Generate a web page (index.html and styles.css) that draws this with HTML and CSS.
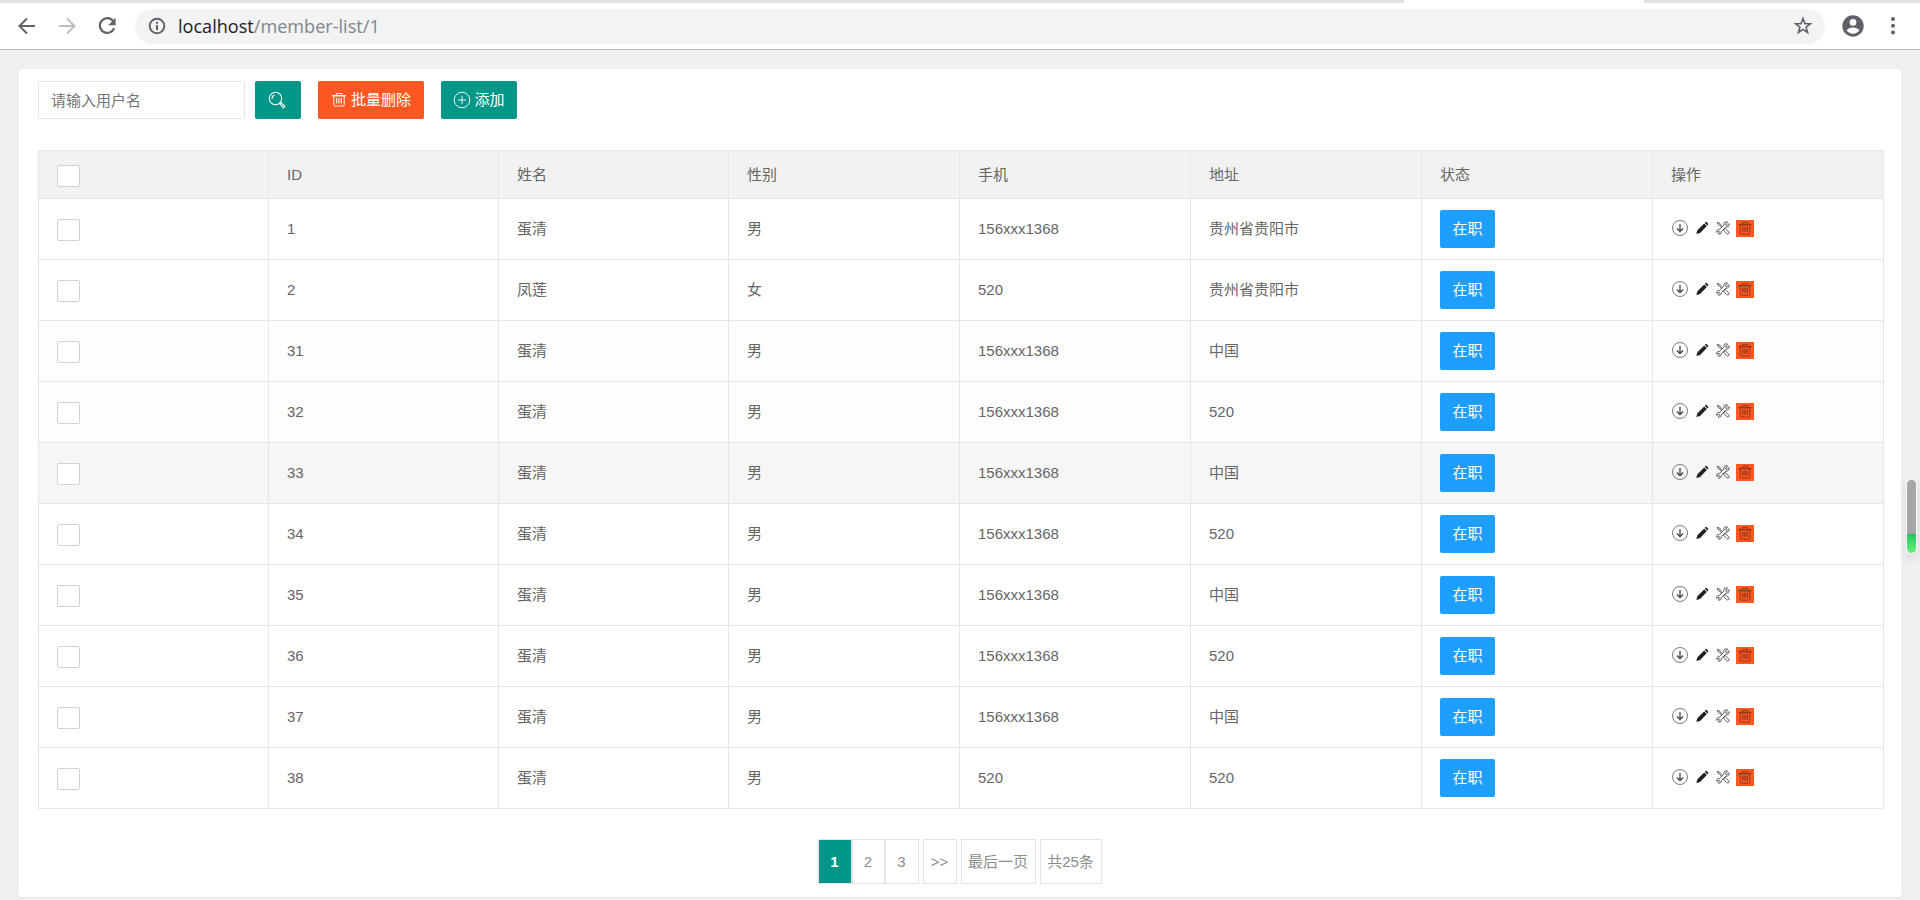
FILE: index.html
```html
<!DOCTYPE html>
<html lang="zh-CN">
<head>
	<meta charset="utf-8">
	<title>member-list</title>
	<link rel="stylesheet" href="styles.css">
</head>
<body>
	<svg class="sprite">
		<symbol id="i-del" viewBox="0 0 16 16">
			<path d="M1 3.500h14M5.200 3V1.500h5.600V3M2.800 4v8.800q0 1.200 1.200 1.200h8q1.200 0 1.200-1.200V4" fill="none" stroke="currentColor" stroke-width=".9"/>
			<path d="M1.500 3.500h13v1.500h-13z" fill="currentColor" opacity=".5"/>
			<path d="M5.700 6v5.500M8 6v5.500M10.300 6v5.500" fill="none" stroke="currentColor" stroke-width="1.100"/>
		</symbol>
		<symbol id="i-down" viewBox="0 0 16 16">
			<circle cx="8" cy="8" r="7.500" fill="none" stroke="currentColor" stroke-width=".7"/>
			<path d="M8 4v7.400M4.900 8.500L8 11.500l3.100-3" fill="none" stroke="currentColor" stroke-width="1.300"/>
		</symbol>
		<symbol id="i-edit" viewBox="0 0 16 16">
			<path d="M1.500 14.800l1.200-4.300 7.800-7.700 3 3-7.700 7.800zM11.200 2.100l1-.9q.6-.5 1.100 0l1.800 1.800q.5.500 0 1.100l-.9 1z" fill="currentColor"/>
		</symbol>
		<symbol id="i-tool" viewBox="0 0 16 16">
			<path d="M1.500 1.500l2.800 1 .8 1.800 2.400 2.400M1.500 1.500l1 2.700 1.800.9 2.500 2.400M9.200 9.200l1.600-.4 4 4q.4 1.200-.5 1.900-.9.500-1.800-.2l-3.800-3.800zM13.300 1.300l-2.200 2.200.3 1.300 1.300.3 2.100-2.100q.6 2.800-1.300 3.800-1 .4-2.200.1l-5.400 5.400q.4 1.800-.9 2.500-1.200.7-2.500 0l1.600-1.700-.4-1.200-1.200-.3-1.600 1.500q-.5-2.500 1.200-3.400 1-.4 1.900-.1l5.100-5q-.5-2.200.8-3.200 1.400-.9 3.400-.1z" fill="none" stroke="currentColor" stroke-width="1"/>
		</symbol>
	</svg>

	<div class="tabs"><div class="tab"></div></div>
	<div class="toolbar">
		<svg class="back" viewBox="0 0 20 20"><path d="M18 10H3M10 2.500L2.500 10l7.500 7.500"/></svg>
		<svg class="forward" viewBox="0 0 20 20"><path d="M2 10h15M10 2.500l7.500 7.500-7.500 7.500"/></svg>
		<svg class="reload" viewBox="0 0 20 20"><path d="M16.300 5.200A7.400 7.400 0 1 0 17.200 12.200"/><path class="solid" d="M18.600 1.800v7.400h-7.400z"/></svg>
		<div class="address">
			<svg class="info" viewBox="0 0 18 18"><circle cx="9" cy="9" r="7.300"/><path d="M9 8v5M9 4.800v1.900"/></svg>
			<span class="url"><b>localhost</b>/member-list/1</span>
			<svg class="star" viewBox="0 0 20 20"><path d="M10 2.500l1.900 5.100 5.500.2-4.300 3.400 1.500 5.300-4.600-3.100-4.600 3.100 1.500-5.300-4.300-3.400 5.500-.2z"/></svg>
		</div>
		<svg class="user" viewBox="0 0 22 22"><circle cx="11" cy="11" r="10.700"/><circle class="cut" cx="11" cy="7.400" r="3.300"/><path class="cut" d="M4.600 15.600q1.700-3 6.400-3t6.400 3q-2.300 3.100-6.400 3.100t-6.400-3.100z"/></svg>
		<svg class="more" viewBox="0 0 4 18"><circle cx="2" cy="2" r="2"/><circle cx="2" cy="8.700" r="2"/><circle cx="2" cy="15.400" r="2"/></svg>
	</div>

	<div class="card">
		<div class="search">
			<input type="text" class="input" placeholder="请输入用户名">
			<button class="btn btn-search">
				<svg viewBox="0 0 18 18"><circle cx="7.500" cy="7.500" r="6.200"/><path d="M4 8q0-3 2.600-4M11.600 12.600l1.200-1.100 4 3.800-1.400 1.600z"/></svg>
			</button>
			<button class="btn btn-danger"><svg><use href="#i-del"/></svg>批量删除</button>
			<button class="btn btn-add"><svg viewBox="0 0 18 18"><circle cx="9" cy="9" r="7.800"/><path d="M9 4.800v8.400M4.800 9h8.400"/></svg>添加</button>
		</div>

		<table class="table">
			<thead>
				<tr>
					<th class="narrow"><i class="checkbox"></i></th>
					<th class="narrow">ID</th>
					<th class="narrow">姓名</th>
					<th>性别</th>
					<th>手机</th>
					<th>地址</th>
					<th>状态</th>
					<th>操作</th>
				</tr>
			</thead>
			<tbody id="members"></tbody>
		</table>

		<div class="page">
			<span class="current">1</span><a class="second">2</a><a>3</a><a class="gap next">&gt;&gt;</a><a class="gap last">最后一页</a><a class="gap total">共25条</a>
		</div>
	</div>
	<div class="scroll"></div>

	<script>
		var members = [
			[1, "蛋清", "男", "156xxx1368", "贵州省贵阳市"],
			[2, "凤莲", "女", "520", "贵州省贵阳市"],
			[31, "蛋清", "男", "156xxx1368", "中国", "fade"],
			[32, "蛋清", "男", "156xxx1368", "520", "fade"],
			[33, "蛋清", "男", "156xxx1368", "中国", "hover"],
			[34, "蛋清", "男", "156xxx1368", "520"],
			[35, "蛋清", "男", "156xxx1368", "中国"],
			[36, "蛋清", "男", "156xxx1368", "520"],
			[37, "蛋清", "男", "156xxx1368", "中国"],
			[38, "蛋清", "男", "520", "520"]
		];

		function icon(name) {
			return '<svg class="' + name + '"><use href="#i-' + name + '"/></svg>';
		}

		document.getElementById("members").innerHTML = members.map(function (m) {
			return '<tr class="' + (m[5] || "") + '"><td><i class="checkbox"></i></td>' +
				m.slice(0, 5).map(function (v) { return "<td>" + v + "</td>"; }).join("") +
				'<td><span class="btn btn-status">在职</span></td>' +
				'<td><div class="actions">' + icon("down") + icon("edit") + icon("tool") + icon("del") + "</div></td></tr>";
		}).join("");
	</script>
</body>
</html>
```
FILE: styles.css
```css
* {
	box-sizing: border-box;
}

body {
	margin: 0;
	height: 900px;
	overflow: hidden;
	background: #f0f0f0;
	color: #666;
	font: 15px/24px "Liberation Sans", "Noto Sans CJK SC", sans-serif;
}

svg {
	display: block;
	flex: none;
}

.sprite {
	display: none;
}

/* browser bar */
.tabs {
	height: 3px;
	background: #dee1e6;
}

.tab {
	width: 240px;
	height: 3px;
	margin-left: 1404px;
	background: #fff;
}

.toolbar {
	display: flex;
	align-items: center;
	height: 47px;
	padding: 0 25px 0 17px;
	background: #fff;
	border-bottom: 1px solid #b3b3b3;
}

.toolbar svg {
	fill: none;
	stroke: #5f6368;
	stroke-width: 2;
}

.back, .forward, .reload {
	width: 20px;
	height: 20px;
	margin-right: 20px;
}

.toolbar .forward {
	margin-right: 20px;
	stroke: #bbbdbf;
}

.toolbar .reload {
	margin-right: 18px;
	stroke-width: 2.2;
}

.toolbar .solid, .toolbar .user, .toolbar .more {
	fill: #5f6368;
	stroke: none;
}

.address {
	display: flex;
	align-items: center;
	flex: 1;
	height: 35px;
	padding: 0 12px 0 13px;
	border-radius: 18px;
	background: #f1f3f4;
}

.info {
	width: 18px;
	height: 18px;
}

.url {
	flex: 1;
	margin-left: 12px;
	font: 18.1px/33px "Open Sans", sans-serif;
	color: #80868b;
}

.url b {
	font-weight: normal;
	color: #202124;
}

.toolbar .star {
	width: 20px;
	height: 20px;
	stroke-width: 1.6;
}

.user {
	width: 22px;
	height: 22px;
	margin: 0 27px 0 17px;
}

.toolbar .cut {
	fill: #fff;
}

.more {
	width: 4px;
	height: 18px;
}

/* content */
.card {
	width: 1882px;
	height: 828px;
	margin: 19px 0 0 19px;
	padding: 12px 18px 0 19px;
	border-radius: 2px;
	background: #fff;
	box-shadow: 0 1px 2px rgba(0, 0, 0, .05);
}

.search {
	display: flex;
	height: 38px;
}

.input {
	width: 207px;
	height: 38px;
	margin-right: 10px;
	padding: 0 12px;
	border: 1px solid #e6e6e6;
	border-radius: 2px;
	font: inherit;
}

.input::placeholder {
	color: #757575;
}

.btn {
	display: flex;
	align-items: center;
	justify-content: center;
	height: 38px;
	padding: 0;
	border: 0;
	border-radius: 2px;
	background: #009688;
	color: #fff;
	font: inherit;
}

.btn svg {
	width: 18px;
	height: 18px;
	fill: none;
	stroke: #fff;
	stroke-width: 1.1;
}

.btn-search {
	width: 46px;
	margin-right: 17px;
	padding-right: 2px;
}

.btn-danger {
	width: 106px;
	margin-right: 17px;
	background: #ff5722;
}

.btn-danger svg {
	width: 16px;
	height: 16px;
	margin-right: 4px;
	stroke: none;
}

.btn-add {
	width: 76px;
}

.btn-add svg {
	margin-right: 3px;
	stroke-width: .9;
}

.btn-status {
	width: 55px;
	background: #1e9fff;
}

.table {
	width: 1846px;
	margin-top: 31px;
	table-layout: fixed;
	border-collapse: collapse;
}

.table th, .table td {
	height: 61px;
	padding: 0 18px;
	border: 1px solid #e6e6e6;
	font-weight: normal;
	text-align: left;
}

.table th {
	height: 48px;
	background: #f2f2f2;
}

.table .narrow {
	width: 230px;
}

.fade {
	background: #fdfdfd;
}

.hover {
	background: #f6f6f6;
}

.checkbox {
	display: block;
	width: 23px;
	height: 22px;
	margin-top: 3px;
	border: 1px solid #d2d2d2;
	border-radius: 2px;
	background: #fff;
}

td .checkbox {
	margin-top: 1px;
}

.actions {
	display: flex;
	align-items: center;
	height: 17px;
	margin-bottom: 2px;
	color: #444;
}

.actions .down {
	width: 16px;
	height: 16px;
	margin: 0 7px 0 1px;
}

.actions .edit {
	width: 14px;
	height: 14px;
	margin-right: 7px;
	color: #222;
}

.actions .tool {
	width: 14px;
	height: 14px;
	margin-right: 6px;
}

.actions .del {
	width: 18px;
	height: 17px;
	padding: 1px;
	background: #ff5722;
	color: #7d3018;
}

.page {
	display: flex;
	justify-content: center;
	margin-top: 30px;
	padding-right: 2px;
	color: #8c8c8c;
}

.page a, .page span {
	width: 34px;
	height: 45px;
	border: 1px solid #e2e2e2;
	line-height: 43px;
	text-align: center;
}

.page .current {
	background: #009688;
	color: #fff;
	font-weight: bold;
}

.page .second {
	width: 33px;
}

.page .gap {
	margin-left: 4px;
}

.page .last {
	width: 75px;
}

.page .total {
	width: 62px;
}

/* floating scroll thumb */
.scroll {
	position: absolute;
	top: 480px;
	left: 1907px;
	width: 9px;
	height: 73px;
	border-radius: 5px;
	background: linear-gradient(#a6a6a6 54px, #1fbe62 54px, #2bd068 57px, #6cf06f);
	box-shadow: 0 0 1px 1px #fafafa, 0 4px 8px 3px rgba(0, 0, 0, .07);
}
```
